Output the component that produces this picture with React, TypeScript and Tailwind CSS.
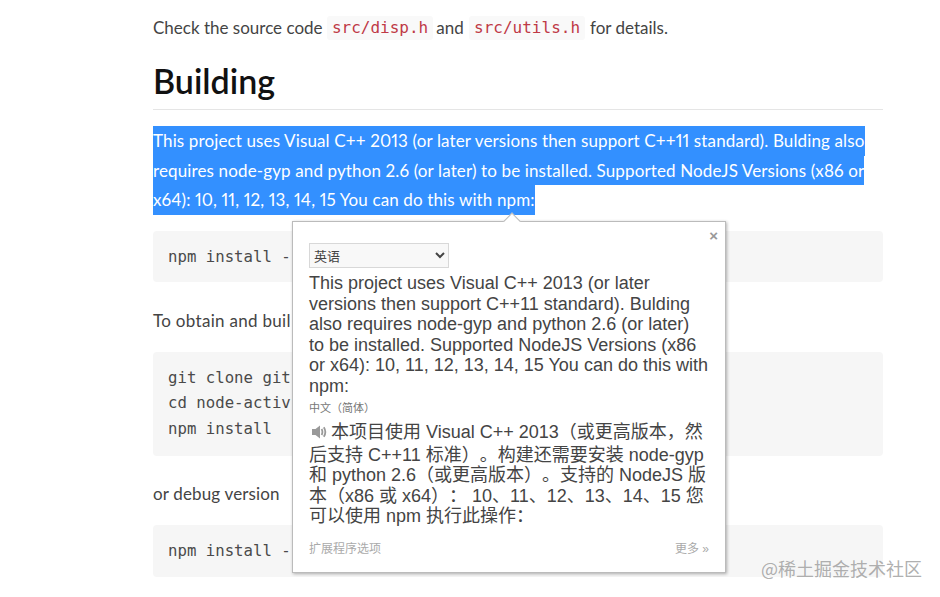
const mono = "font-['DejaVu_Sans_Mono','Liberation_Mono',monospace]";
const popupFont = "font-['Liberation_Sans','Noto_Sans_CJK_SC',sans-serif]";

function CodeBlock({ lines, className }: { lines: string[]; className: string }) {
  return (
    <pre className={`${mono} ${className} bg-[#f6f6f6] rounded-[4px] px-[15px] text-[15.7px] leading-[25.5px] text-[#4a4a4a] overflow-hidden`}>
      {lines.map((line) => (
        <div key={line}>{line}</div>
      ))}
    </pre>
  );
}

function Popup() {
  return (
    <div className={`${popupFont} absolute left-[292px] top-[221px] w-[434px] h-[352px] bg-white border border-[#bbbbbb] shadow-[1px_1px_3px_rgba(0,0,0,0.3)] pl-4 pr-4 pt-[21px] text-[#444444] [text-spacing-trim:space-all]`}>
      <div className="absolute left-[213px] -top-[7px] w-[12px] h-[12px] rotate-45 bg-white border-l border-t border-[#bbbbbb]" />
      <span className="absolute right-[7px] top-[5px] text-[15px] leading-[18px] font-bold text-[#999999]">×</span>
      <select className="block w-[140px] h-[25px] bg-[#f8f8f8] border border-[#d8d8d8] text-[13px] leading-[18px] text-[#444444] font-['Noto_Sans_CJK_SC',sans-serif]">
        <option>英语</option>
      </select>
      <p className="mt-[5px] w-[400px] text-[18px] leading-[20.6px]">
        This project uses Visual C++ 2013 (or later versions then support C++11 standard). Bulding also requires node-gyp and python 2.6 (or later) to be installed. Supported NodeJS Versions (x86 or x64): 10, 11, 12, 13, 14, 15 You can do this with npm:
      </p>
      <p className="mt-[3px] text-[11px] leading-[16px] text-[#777777]">中文（简体）</p>
      <p className="mt-[6px] w-[400px] text-[18px] leading-[20.6px]">
        <span className="inline-block w-0 h-[23px] align-top" />
        <svg className="inline-block w-[16px] h-[16px] ml-[2px] mr-[4px] align-[-2px]" viewBox="0 0 16 16" fill="#999999">
          <path d="M1 5h3.5L9 1.5v13L4.5 11H1z" />
          <path d="M10.6 5c1 1.8 1 4.2 0 6M12.8 3.2c1.8 2.8 1.8 6.8 0 9.6" fill="none" stroke="#999999" strokeWidth="1.8" />
        </svg>
        本项目使用 Visual C++ 2013（或更高版本，然后支持 C++11 标准）。构建还需要安装 node-gyp 和 python 2.6（或更高版本）。支持的 NodeJS 版本（x86 或 x64）： 10、11、12、13、14、15 您可以使用 npm 执行此操作：
      </p>
      <div className="absolute left-4 right-4 bottom-[15px] flex justify-between text-[12px] leading-[16px] text-[#aaaaaa]">
        <span>扩展程序选项</span>
        <span>更多 »</span>
      </div>
    </div>
  );
}

export default function App() {
  return (
    <div className="relative w-[940px] h-[597px] overflow-hidden bg-white font-['Lato',sans-serif] [font-variant-numeric:proportional-nums]">
      <main className="w-[730px] ml-[153px] text-[17px] text-[#444444] pt-[16px]">
        <p className="leading-[24px] h-[24px] flex items-center whitespace-pre">
          Check the source code{" "}
          <code className={`${mono} text-[16px] text-[#bf3a46] bg-[#f9f9f9] rounded-[3px] px-[5px] mr-[3px]`}>src/disp.h</code>
          {" "}and{" "}
          <code className={`${mono} text-[16px] text-[#bf3a46] bg-[#f9f9f9] rounded-[3px] px-[5px] ml-[1px] mr-[5px]`}>src/utils.h</code>
          {" "}for details.
        </p>
        <h2 className="mt-[20px] h-[50px] leading-[42px] text-[34px] font-semibold text-[#111111] border-b border-[#e5e5e5]">Building</h2>
        <div className="mt-[16px] text-white leading-[29.5px] tracking-[0.13px]">
          <div className="w-fit bg-[#3390ff] whitespace-nowrap">This project uses Visual C++ 2013 (or later versions then support C++11 standard). Bulding also</div>
          <div className="w-fit bg-[#3390ff] whitespace-nowrap">requires node-gyp and python 2.6 (or later) to be installed. Supported NodeJS Versions (x86 or</div>
          <div className="w-fit bg-[#3390ff] whitespace-nowrap">x64): 10, 11, 12, 13, 14, 15 You can do this with npm:</div>
        </div>
        <CodeBlock className="mt-[16px] h-[51px] py-[13px]" lines={["npm install -"]} />
        <p className="mt-[27px] leading-[24px] whitespace-nowrap tracking-[0.3px]">To obtain and buil</p>
        <CodeBlock className="mt-[19px] h-[104px] py-[13px]" lines={["git clone git", "cd node-activ", "npm install"]} />
        <p className="mt-[26px] leading-[24px] tracking-[0.15px]">or debug version</p>
        <CodeBlock className="mt-[19px] h-[52px] py-[13px]" lines={["npm install -"]} />
      </main>
      <Popup />
      <div className="absolute left-[761px] top-[557px] text-[18px] leading-[22px] text-[#9a9a9a]/80 font-['Noto_Sans_CJK_SC',sans-serif] whitespace-nowrap">@稀土掘金技术社区</div>
    </div>
  );
}
